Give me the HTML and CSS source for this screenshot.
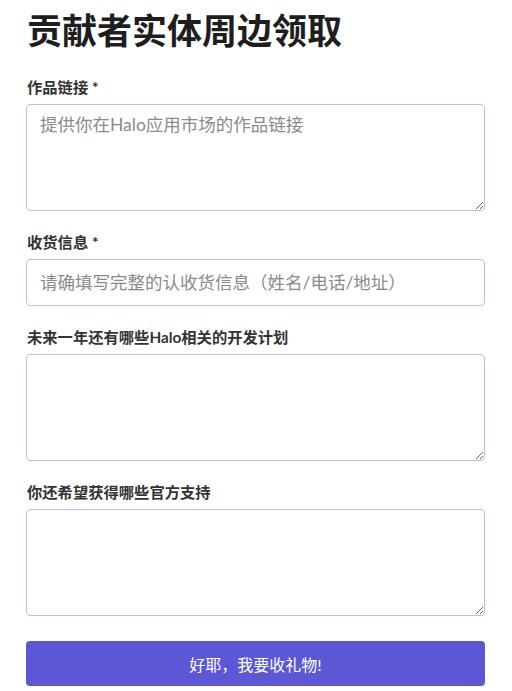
FILE: index.html
```html
<!DOCTYPE html>
<html lang="zh-CN">
<head>
<meta charset="utf-8">
<title>贡献者实体周边领取</title>
<link rel="stylesheet" href="styles.css">
</head>
<body>
<main class="page">
  <h1 class="title">贡献者实体周边领取</h1>
  <form class="form">
    <div class="field">
      <label class="label" for="works">作品链接 *</label>
      <textarea id="works" class="control area" placeholder="提供你在Halo应用市场的作品链接"></textarea>
    </div>
    <div class="field">
      <label class="label" for="addr">收货信息 *</label>
      <input id="addr" class="control input" type="text" placeholder="请确填写完整的认收货信息（姓名/电话/地址）">
    </div>
    <div class="field">
      <label class="label" for="plan">未来一年还有哪些Halo相关的开发计划</label>
      <textarea id="plan" class="control area"></textarea>
    </div>
    <div class="field">
      <label class="label" for="support">你还希望获得哪些官方支持</label>
      <textarea id="support" class="control area"></textarea>
    </div>
    <button class="submit" type="button">好耶，我要收礼物!</button>
  </form>
</main>
</body>
</html>
```
FILE: styles.css
```css
* { box-sizing: border-box; }

html, body {
  margin: 0;
  padding: 0;
  background: #ffffff;
}

body {
  font-family: "Lato", "Noto Sans CJK SC", sans-serif;
  color: #333333;
}

.page {
  padding: 0 27px 0 26px;
}

.title {
  margin: 9px 0 0 1px;
  font-size: 35px;
  line-height: 42px;
  font-weight: 700;
  color: #1e1e1e;
  letter-spacing: 0;
}

.form {
  display: flex;
  flex-direction: column;
  gap: 21px;
  margin-top: 26px;
}

.field {
  display: flex;
  flex-direction: column;
}

.label {
  display: block;
  font-size: 15.3px;
  line-height: 20px;
  font-weight: 700;
  color: #333333;
  margin: 0 0 7px 1px;
}

.control {
  display: block;
  width: 100%;
  margin: 0;
  border: 1px solid #b9bfe2;
  border-radius: 4px;
  background: #ffffff;
  font-family: "Lato", "Noto Sans CJK SC", sans-serif;
  font-size: 17.5px;
  color: #333333;
  outline: none;
}

.control::placeholder {
  color: #8a8a8a;
  opacity: 1;
}

.area {
  height: 107px;
  padding: 8px 13px;
  line-height: 24px;
  resize: vertical;
}

.input {
  height: 47px;
  padding: 0 13px;
  line-height: 24px;
}

.submit {
  display: block;
  width: 100%;
  height: 45px;
  margin-top: 4px;
  border: none;
  border-radius: 4px;
  background: #5b57d5;
  color: #ffffff;
  font-family: "Lato", "Noto Sans CJK SC", sans-serif;
  font-size: 16px;
  cursor: pointer;
}
```
